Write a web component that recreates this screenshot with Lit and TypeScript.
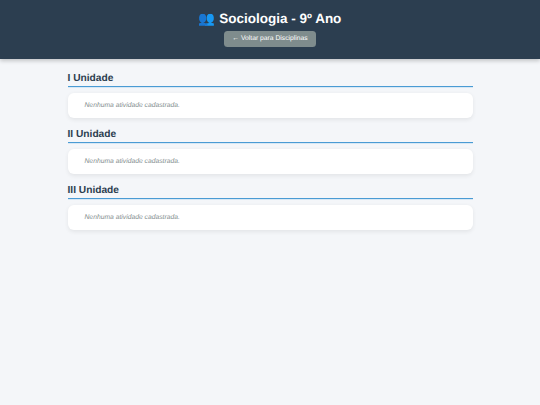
import { LitElement, html, css } from "lit";
import { customElement } from "lit/decorators.js";

@customElement("app-root")
export class AppRoot extends LitElement {
  static styles = css`
    :host { display: block; min-height: 405px; background: #f4f6f9; font-family: "Liberation Sans", Arial, sans-serif; color: #2c3e50; text-rendering: geometricPrecision; }
    header { background: #2c3e50; height: 59px; box-sizing: border-box; padding-top: 10px; text-align: center; box-shadow: 0 1.5px 4px rgba(0,0,0,.2); display: flex; flex-direction: column; align-items: center; }
    h1 { margin: 0; color: #fff; font-size: 13.5px; line-height: 17px; font-weight: 700; }
    .back { margin-top: 4px; background: #7f8c8d; color: #fff; font-size: 6.75px; padding: 3.75px 8px; border-radius: 3.5px; line-height: 8.5px; }
    main { width: 405px; margin: 0 auto; padding-top: 14px; }
    h2 { margin: 0; font-size: 10.2px; line-height: 12px; font-weight: 700; padding-bottom: 1px; border-bottom: 1px solid #4a9bd4; box-shadow: 0 1px 0 rgba(52,152,219,.15); }
    .card { background: #fff; border-radius: 6px; margin: 6px 0 11px; padding: 8px 17px; box-shadow: 0 1.5px 4px rgba(0,0,0,.07); font-size: 6.75px; line-height: 9px; font-style: italic; color: #7f8c8d; }
  `;
  render() {
    return html`<header><h1>👥 Sociologia - 9º Ano</h1><div class="back">← Voltar para Disciplinas</div></header>
    <main>${["I Unidade","II Unidade","III Unidade"].map(u => html`<h2>${u}</h2><div class="card">Nenhuma atividade cadastrada.</div>`)}</main>`;
  }
}
